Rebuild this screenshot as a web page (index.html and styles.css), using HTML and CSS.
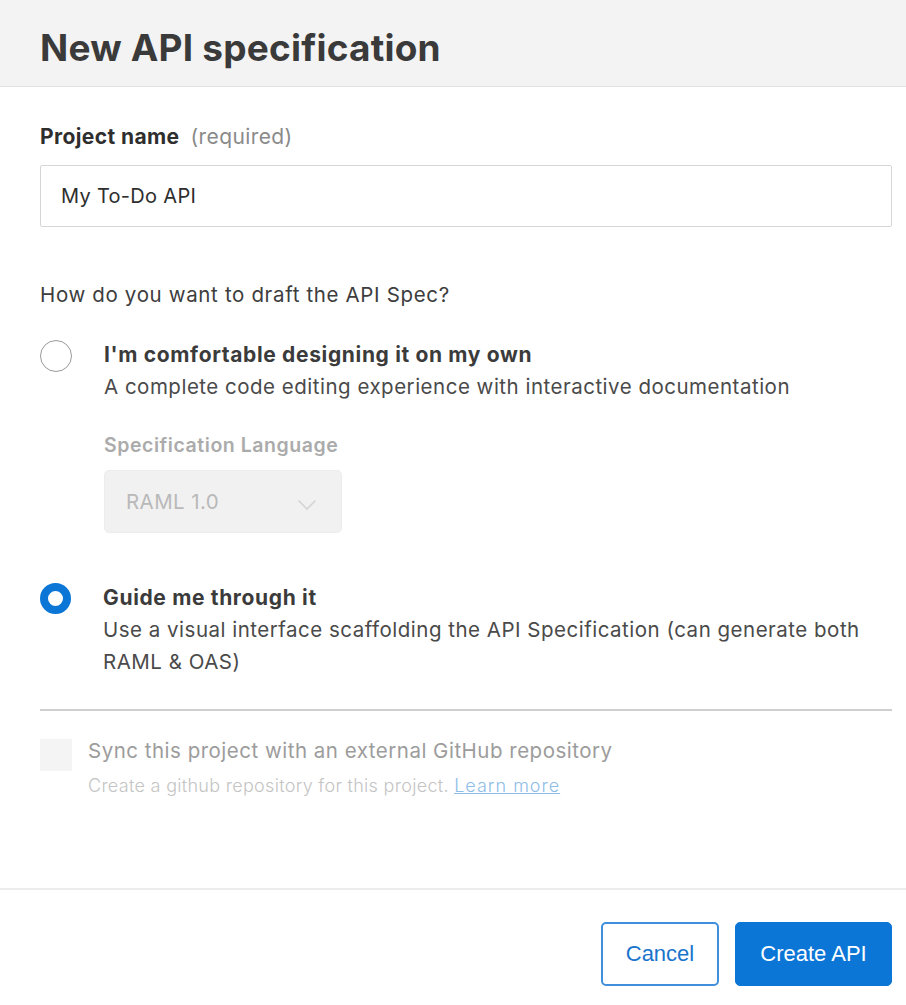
FILE: index.html
```html
<!DOCTYPE html>
<html lang="en">
<head>
<meta charset="utf-8">
<title>New API specification</title>
<link rel="stylesheet" href="styles.css">
</head>
<body>
<div class="modal">
  <header class="modal-header">
    <h1 class="title">New API specification</h1>
  </header>
  <main class="modal-body">
    <div class="field-label"><span class="label-strong">Project name</span><span class="label-hint">(required)</span></div>
    <div class="text-input">My To-Do API</div>

    <p class="question">How do you want to draft the API Spec?</p>

    <div class="option">
      <span class="radio"></span>
      <div class="option-text">
        <div class="option-title">I'm comfortable designing it on my own</div>
        <div class="option-desc">A complete code editing experience with interactive documentation</div>
        <div class="sub-label">Specification Language</div>
        <div class="select">
          <span>RAML 1.0</span>
          <svg class="chevron" width="20" height="12" viewBox="0 0 20 12"><path d="M1.5 1.5 L10 10 L18.5 1.5" fill="none" stroke="#d4d4d4" stroke-width="1.6"/></svg>
        </div>
      </div>
    </div>

    <div class="option option-second">
      <span class="radio checked"></span>
      <div class="option-text">
        <div class="option-title">Guide me through it</div>
        <div class="option-desc">Use a visual interface scaffolding the API Specification (can generate both RAML &amp; OAS)</div>
      </div>
    </div>

    <hr class="divider">

    <div class="sync">
      <span class="checkbox"></span>
      <div class="sync-text">
        <div class="sync-title">Sync this project with an external GitHub repository</div>
        <div class="sync-sub">Create a github repository for this project. <a class="link" href="#">Learn more</a></div>
      </div>
    </div>
  </main>
  <footer class="modal-footer">
    <button class="btn btn-secondary">Cancel</button>
    <button class="btn btn-primary">Create API</button>
  </footer>
</div>
</body>
</html>
```
FILE: styles.css
```css
* { box-sizing: border-box; }
html, body { margin: 0; padding: 0; background: #fff; }
body { font-family: Inter, "Noto Sans", "Liberation Sans", sans-serif; color: #3d3d3d; }

.modal { width: 906px; height: 1005px; display: flex; flex-direction: column; overflow: hidden; }

.modal-header {
  height: 87px;
  flex: none;
  background: #f3f3f3;
  border-bottom: 1px solid #e2e2e2;
  padding: 24px 0 0 40px;
}
.title {
  margin: 0;
  font-size: 37px;
  line-height: 48px;
  font-weight: 700;
  color: #3a3a3a;
  letter-spacing: 0.2px;
}

.modal-body { padding: 0 14px 0 40px; flex: 1; }

.field-label { margin-top: 36px; height: 28px; line-height: 28px; font-size: 21px; letter-spacing: 0.4px; }
.label-strong { font-weight: 700; color: #2e2e2e; }
.label-hint { color: #8a8a8a; margin-left: 11px; }

.text-input {
  margin-top: 14px;
  height: 62px;
  border: 1px solid #d6d6d6;
  border-radius: 2px;
  padding: 0 20px;
  line-height: 60px;
  font-size: 20px;
  letter-spacing: 0.3px;
  color: #2e2e2e;
}

.question {
  margin: 54px 0 0;
  font-size: 20.5px;
  line-height: 28px;
  letter-spacing: 0.65px;
  color: #3d3d3d;
}

.option { display: flex; align-items: flex-start; gap: 32px; margin-top: 31px; }
.option-second { margin-top: 50px; }
.radio {
  flex: none;
  width: 32px; height: 32px;
  border-radius: 50%;
  border: 1.6px solid #9a9a9a;
}
.radio.checked { border: 8.5px solid #0b76d6; width: 31px; height: 31px; }

.option-text { flex: 1; }
.option-title { font-size: 21px; line-height: 30px; font-weight: 700; letter-spacing: 0.65px; color: #3b3b3b; }
.option-desc { margin-top: 1px; font-size: 20.5px; line-height: 32px; letter-spacing: 0.5px; color: #4a4a4a; }

.sub-label {
  margin-top: 30px;
  font-size: 19.5px;
  line-height: 24px;
  font-weight: 600;
  letter-spacing: 0.55px;
  color: #ababab;
}
.select {
  margin-top: 13px;
  width: 238px; height: 63px;
  background: #f1f1f1;
  border: 1px solid #ececec;
  border-radius: 5px;
  display: flex; align-items: center; justify-content: space-between;
  padding: 0 24px 0 21px;
  font-size: 20.5px;
  letter-spacing: 0.4px;
  color: #b9b9b9;
}
.chevron { margin-top: 6px; }

.divider { margin: 31px 0 0; border: 0; border-top: 2px solid #cfcfcf; }

.sync { display: flex; align-items: flex-start; gap: 16px; margin-top: 28px; }
.checkbox { flex: none; width: 32px; height: 32px; background: #f4f4f4; }
.sync-text { flex: 1; }
.sync-title { font-size: 20.5px; line-height: 26px; letter-spacing: 0.5px; color: #9c9c9c; margin-top: -1px; }
.sync-sub { margin-top: 10px; font-size: 18px; line-height: 24px; letter-spacing: 0.3px; color: #c4c4c4; font-weight: 300; }
.link { color: #8ebde8; text-decoration: underline; letter-spacing: 1px; }

.modal-footer {
  height: 117px;
  flex: none;
  border-top: 2px solid #ececec;
  display: flex; justify-content: flex-end; align-items: flex-start;
  gap: 16px;
  padding: 32px 14px 0 0;
}
.btn {
  height: 64px;
  border-radius: 5px;
  font-family: "Liberation Sans", Arial, sans-serif;
  font-size: 22px;
  padding: 0;
  cursor: pointer;
}
.btn-secondary { width: 118px; background: #fff; border: 2px solid #3f8fdc; color: #1a74cc; }
.btn-primary { width: 157px; background: #0b76d6; border: 1px solid #0b76d6; color: #fff; }
```
